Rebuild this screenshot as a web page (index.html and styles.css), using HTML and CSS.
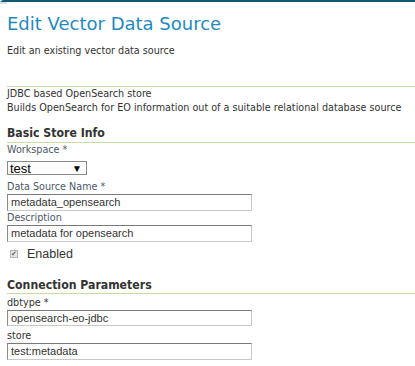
FILE: index.html
```html
<!DOCTYPE html>
<html>
<head>
<meta charset="utf-8">
<link rel="stylesheet" href="styles.css">
</head>
<body>
<div class="topbar"><span class="corner"></span><span class="bar"></span></div>
<div class="page">
  <h1 class="title">Edit Vector Data Source</h1>
  <p class="subtitle">Edit an existing vector data source</p>
  <div class="store-desc">
    <div>JDBC based OpenSearch store</div>
    <div>Builds OpenSearch for EO information out of a suitable relational database source</div>
  </div>
  <h2 class="section">Basic Store Info</h2>
  <div class="field">
    <label class="lbl">Workspace *</label>
    <div class="select"><span>test</span><span class="arrow">▼</span></div>
  </div>
  <div class="field gap">
    <label class="lbl">Data Source Name *</label>
    <div class="input">metadata_opensearch</div>
  </div>
  <div class="field">
    <label class="lbl">Description</label>
    <div class="input">metadata for opensearch</div>
  </div>
  <div class="check-row">
    <span class="checkbox">✔</span><span class="check-label">Enabled</span>
  </div>
  <h2 class="section second">Connection Parameters</h2>
  <div class="field first-conn">
    <label class="lbl dark">dbtype *</label>
    <div class="input short">opensearch-eo-jdbc</div>
  </div>
  <div class="field gap-s">
    <label class="lbl dark">store</label>
    <div class="input">test:metadata</div>
  </div>
</div>
</body>
</html>
```
FILE: styles.css
```css
html, body { margin: 0; padding: 0; background: #fff; }
body { font-family: "DejaVu Sans Condensed", "DejaVu Sans", sans-serif; color: #333; }
.topbar { display: flex; height: 4px; }
.corner { width: 7px; height: 4px; border-top-left-radius: 4px; background: linear-gradient(#0f5877 0 2px, #cfe3ee 2px); }
.bar { flex: 1; height: 2px; background: #0f5877; }
.page { padding: 0 0 0 7px; }
.title { margin: 8px 0 0 0; font-family: "DejaVu Sans", sans-serif; font-size: 18px; font-weight: normal; color: #1f8ac0; line-height: 24px; }
.subtitle { margin: 8px 0 0 0; font-size: 10.7px; line-height: 14px; color: #333; }
.store-desc { margin-top: 28px; border-top: 1px solid #c8dba8; padding-top: 0; font-size: 10.7px; line-height: 14px; color: #333; }
.section { margin: 10px 0 0 0; font-size: 12.2px; font-weight: bold; color: #333; line-height: 16px; padding-bottom: 1px; border-bottom: 1px solid #c8dba8; }
.section.second { margin-top: 16px; padding-bottom: 0; }
.field { display: flex; flex-direction: column; align-items: flex-start; }
.field.gap { margin-top: 5px; }
.field.first-conn { margin-top: 2px; }
.field.gap-s { margin-top: 3px; }
.lbl { font-size: 10.7px; line-height: 14px; color: #4d5866; }
.lbl.dark { color: #333; }
.select { margin-top: 4px; width: 80px; height: 14px; box-sizing: border-box; border: 1px solid #8a8a8a; display: flex; justify-content: space-between; align-items: center; font-family: "Liberation Sans", Arial, sans-serif; font-size: 13px; color: #000; padding: 0 4px 0 2px; }
.arrow { font-size: 10px; }
.input { width: 245px; height: 17px; box-sizing: border-box; border: 1px solid #c8c8c8; border-top-color: #7a7a7a; border-left-color: #8c8c8c; font-family: "Liberation Sans", Arial, sans-serif; font-size: 11px; line-height: 15px; color: #333; padding: 0 3px; }
.input.short { height: 16px; line-height: 14px; }
.check-row { display: flex; align-items: center; margin-top: 5px; margin-left: 3px; height: 14px; }
.checkbox { width: 8px; height: 8px; box-sizing: border-box; border: 1px solid #b5b5b5; background: #e6e6e6; font-size: 7px; line-height: 6px; text-align: center; color: #555; overflow: hidden; }
.check-label { margin-left: 9px; font-family: "Liberation Sans", Arial, sans-serif; font-size: 12.5px; color: #333; }
```
